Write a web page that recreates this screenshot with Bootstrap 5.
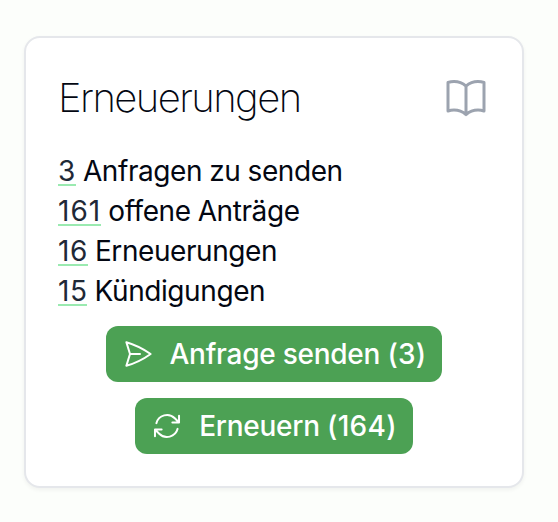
<!DOCTYPE html>
<html lang="de">
<head>
<meta charset="utf-8">
<meta name="viewport" content="width=device-width, initial-scale=1">
<title>Erneuerungen</title>
<link href="https://cdn.jsdelivr.net/npm/bootstrap@5.3.0/dist/css/bootstrap.min.css" rel="stylesheet">
<style>
body{background:#fcfefb;color:#030712;font-family:Inter,"Liberation Sans",sans-serif;font-size:28px;line-height:40px;padding:36px 34px 34px 24px;-webkit-font-smoothing:antialiased}
.panel{--bs-card-border-width:2px;--bs-card-border-color:#e5e7eb;--bs-card-border-radius:16px;height:452px;padding:32px;color:inherit;box-shadow:0 2px 4px rgba(0,0,0,.05)}
.panel-title{font-size:40px;line-height:56px;font-weight:200;letter-spacing:-1.55px;color:#030712}
.panel-icon{width:48px;height:48px;color:#9ca3af}
.stats{margin-top:25px;margin-bottom:15px;letter-spacing:-.42px;word-spacing:-.3px}
.stats a{display:inline-block;line-height:25px;letter-spacing:.5px;color:#1f2937;text-decoration:none;border-bottom:2px solid #9aeab0}
.stats .wide{letter-spacing:1px}
.btn-action{--bs-btn-bg:#4ca154;--bs-btn-color:#fff;--bs-btn-hover-bg:#43914b;--bs-btn-hover-color:#fff;--bs-btn-border-width:0;--bs-btn-padding-x:16px;--bs-btn-padding-y:8px;--bs-btn-border-radius:12px;--bs-btn-font-size:28px;--bs-btn-line-height:40px;--bs-btn-font-weight:500;height:56px;letter-spacing:-.25px}
.btn-action svg{width:32px;height:32px}
.amount{letter-spacing:.3px}
</style>
</head>
<body>
<div class="card panel">
  <div class="d-flex justify-content-between align-items-center">
    <h2 class="panel-title mb-0">Erneuerungen</h2>
    <svg class="panel-icon" viewBox="0 0 24 24" fill="none" stroke="currentColor" stroke-width="1.5" stroke-linecap="round" stroke-linejoin="round"><path d="M12 6.042A8.967 8.967 0 0 0 6 3.75c-1.052 0-2.062.18-3 .512v14.25A8.987 8.987 0 0 1 6 18c2.305 0 4.408.867 6 2.292m0-14.25a8.966 8.966 0 0 1 6-2.292c1.052 0 2.062.18 3 .512v14.25A8.987 8.987 0 0 0 18 18a8.967 8.967 0 0 0-6 2.292m0-14.25v14.25"/></svg>
  </div>
  <div class="stats">
    <div><a href="#">3</a> Anfragen zu senden</div>
    <div><a href="#" class="wide">161</a> offene Anträge</div>
    <div><a href="#">16</a> Erneuerungen</div>
    <div><a href="#">15</a> Kündigungen</div>
  </div>
  <div class="d-flex flex-column align-items-center gap-3">
    <button type="button" class="btn btn-action d-flex align-items-center gap-3"><svg viewBox="0 0 24 24" fill="none" stroke="currentColor" stroke-width="1.5" stroke-linecap="round" stroke-linejoin="round"><path d="M6 12 3.269 3.125A59.769 59.769 0 0 1 21.485 12 59.768 59.768 0 0 1 3.27 20.875L5.999 12Zm0 0h7.5"/></svg><span>Anfrage senden <span class="amount">(3)</span></span></button>
    <button type="button" class="btn btn-action d-flex align-items-center gap-3"><svg viewBox="0 0 24 24" fill="none" stroke="currentColor" stroke-width="1.5" stroke-linecap="round" stroke-linejoin="round"><path d="M16.023 9.348h4.992v-.001M2.985 19.644v-4.992m0 0h4.993m-4.993 0 3.181 3.183a8.25 8.25 0 0 0 13.803-3.7M4.031 9.865a8.25 8.25 0 0 1 13.803-3.7l3.181 3.182m0-4.991v4.99"/></svg><span>Erneuern <span class="amount">(164)</span></span></button>
  </div>
</div>
<script src="https://cdn.jsdelivr.net/npm/bootstrap@5.3.0/dist/js/bootstrap.bundle.min.js"></script>
</body>
</html>
